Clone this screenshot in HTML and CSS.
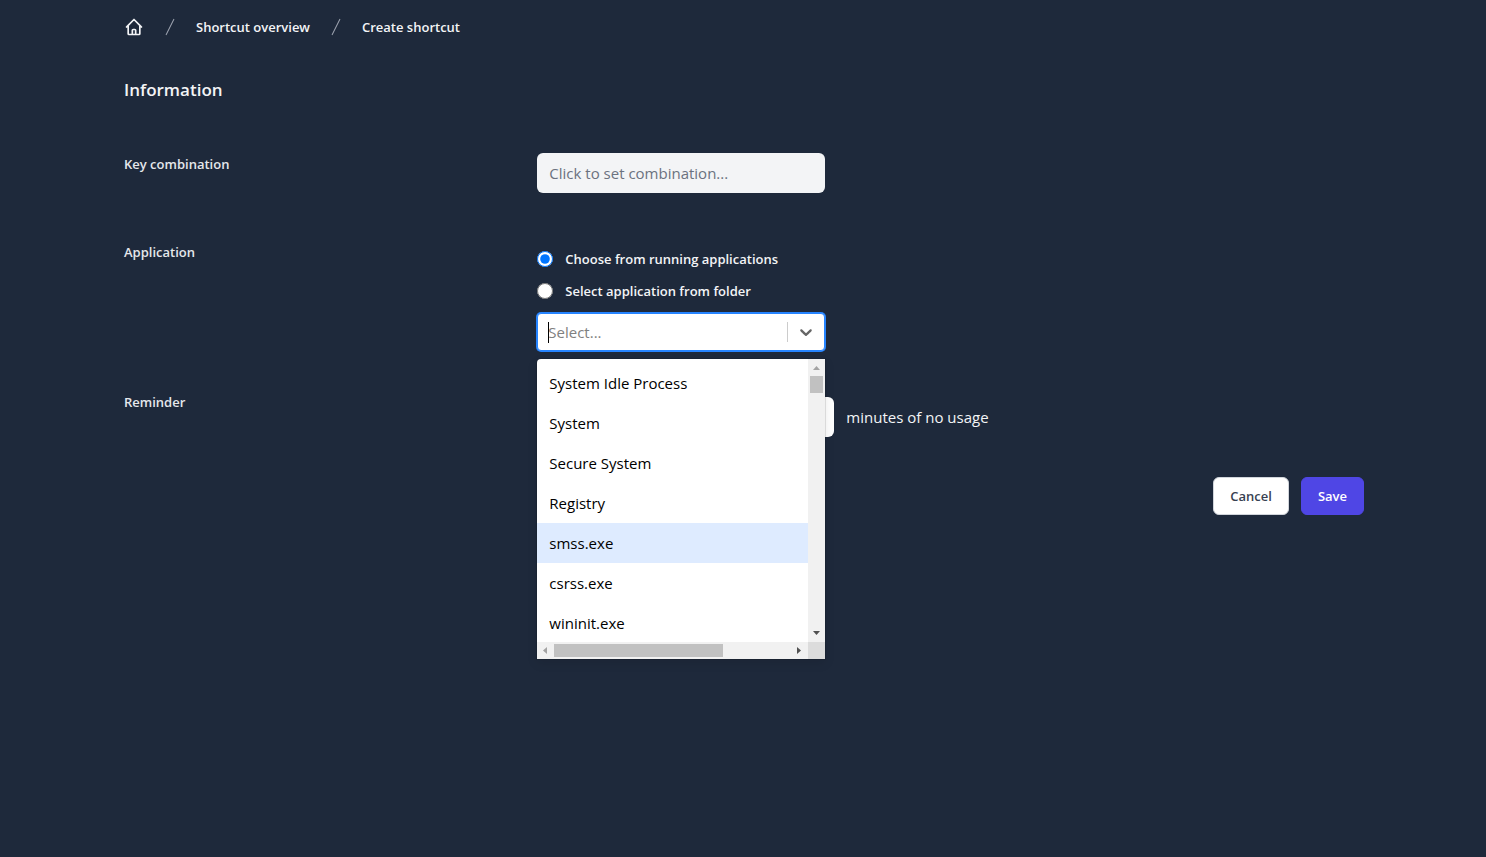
FILE: index.html
```html
<!DOCTYPE html>
<html lang="en">
<head>
    <meta charset="utf-8">
    <title>Create shortcut</title>
    <link rel="stylesheet" href="styles.css">
</head>
<body>
    <div class="container">
        <nav class="breadcrumb" aria-label="Breadcrumb">
            <a href="#" class="home" aria-label="Home">
                <svg class="icon" viewBox="0 0 24 24" fill="none" stroke="currentColor" stroke-width="2" stroke-linecap="round" stroke-linejoin="round"><path d="M3 12l2-2m0 0l7-7 7 7M5 10v10a1 1 0 001 1h3m10-11l2 2m-2-2v10a1 1 0 01-1 1h-3m-6 0a1 1 0 001-1v-4a1 1 0 011-1h2a1 1 0 011 1v4a1 1 0 001 1m-6 0h6"/></svg>
            </a>
            <svg class="icon slash" viewBox="0 0 20 20" fill="currentColor"><path d="M5.555 17.776l8-16 .894.448-8 16-.894-.448z"/></svg>
            <a href="#">Shortcut overview</a>
            <svg class="icon slash" viewBox="0 0 20 20" fill="currentColor"><path d="M5.555 17.776l8-16 .894.448-8 16-.894-.448z"/></svg>
            <a href="#">Create shortcut</a>
        </nav>

        <h1>Information</h1>

        <form>
            <div class="row row-key">
                <label class="row-label" for="combination">Key combination</label>
                <div class="row-fields">
                    <input class="text-input" type="text" id="combination" placeholder="Click to set combination...">
                </div>
            </div>

            <div class="row" role="radiogroup" aria-labelledby="app-label">
                <span class="row-label" id="app-label">Application</span>
                <div class="row-fields app-fields">
                    <label class="radio"><input type="radio" name="source" checked> Choose from running applications</label>
                    <label class="radio"><input type="radio" name="source"> Select application from folder</label>

                    <div class="select">
                        <div class="select-control">
                            <input class="select-input" type="text" role="combobox" aria-labelledby="app-label" aria-expanded="true" aria-controls="app-list" placeholder="Select...">
                            <span class="caret"></span>
                            <span class="separator"></span>
                            <button type="button" class="select-toggle" aria-label="Toggle menu">
                                <svg viewBox="0 0 20 20" width="20" height="20" fill="currentColor"><path d="M4.516 7.548c0.436-0.446 1.043-0.481 1.576 0l3.908 3.747 3.908-3.747c0.533-0.481 1.141-0.446 1.574 0 0.436 0.445 0.408 1.197 0 1.615-0.406 0.418-4.695 4.502-4.695 4.502-0.217 0.223-0.502 0.335-0.787 0.335s-0.57-0.112-0.789-0.335c0 0-4.287-4.084-4.695-4.502s-0.436-1.17 0-1.615z"/></svg>
                            </button>
                        </div>

                        <div class="menu">
                            <ul class="menu-list" role="listbox" id="app-list">
                                <li role="option">System Idle Process</li>
                                <li role="option">System</li>
                                <li role="option">Secure System</li>
                                <li role="option">Registry</li>
                                <li role="option" class="focused">smss.exe</li>
                                <li role="option">csrss.exe</li>
                                <li role="option">wininit.exe</li>
                            </ul>
                            <div class="bar bar-y">
                                <svg class="arrow off" viewBox="0 0 17 17"><path d="M5 11h7L8.500 7z"/></svg>
                                <span class="thumb"></span>
                                <svg class="arrow" viewBox="0 0 17 17"><path d="M5 6h7l-3.500 4z"/></svg>
                            </div>
                            <div class="bar bar-x">
                                <svg class="arrow off" viewBox="0 0 17 17"><path d="M10 5v7L6 8.500z"/></svg>
                                <span class="thumb"></span>
                                <svg class="arrow" viewBox="0 0 17 17"><path d="M6 5v7l4-3.500z"/></svg>
                            </div>
                            <div class="corner"></div>
                        </div>
                    </div>
                </div>
            </div>

            <div class="row">
                <label class="row-label" for="reminder">Reminder</label>
                <div class="row-fields reminder-fields">
                    <input class="text-input minutes" type="number" id="reminder">
                    <span>minutes of no usage</span>
                </div>
            </div>

            <div class="actions">
                <button type="button" class="btn">Cancel</button>
                <button type="submit" class="btn btn-primary">Save</button>
            </div>
        </form>
    </div>
</body>
</html>
```

FILE: styles.css
```css
* {
    box-sizing: border-box;
}

body {
    min-height: 100vh;
    margin: 0;
    background-color: #1e293b;
    color: #f3f4f6;
    font-family: "Segoe UI", "Open Sans", sans-serif;
    font-size: 15px;
    line-height: 24px;
}

input,
button {
    font: inherit;
}

.container {
    max-width: 1280px;
    margin: 0 auto;
    padding: 17px 19px 40px 21px;
}

.breadcrumb {
    display: flex;
    align-items: center;
    gap: 16px;
    font-size: 13px;
    font-weight: 600;
    line-height: 20px;
}

.breadcrumb a {
    color: #f3f4f6;
    text-decoration: none;
}

.icon {
    display: block;
    width: 20px;
    height: 20px;
}

.slash {
    color: #9ca3af;
}

h1 {
    margin: 41px 0 51px;
    font-size: 17px;
    font-weight: 600;
    line-height: 24px;
}

form {
    display: flex;
    flex-direction: column;
    gap: 40px;
}

.row {
    display: grid;
    grid-template-columns: 1fr 2fr;
}

.row-key {
    min-height: 48px;
}

.row-label {
    padding-top: 1px;
    color: #e5e7eb;
    font-size: 13px;
    font-weight: 600;
    line-height: 20px;
}

.text-input {
    display: block;
    width: 288px;
    height: 40px;
    padding: 8px 12px;
    border: 0;
    border-radius: 6px;
    background-color: #f3f4f6;
    color: #111827;
}

.text-input::placeholder {
    color: #6b7280;
}

.app-fields {
    display: flex;
    flex-direction: column;
    gap: 12px;
    padding-top: 8px;
}

.radio {
    display: flex;
    align-items: center;
    gap: 12px;
    font-size: 13px;
    font-weight: 600;
    line-height: 20px;
}

.radio input {
    width: 16px;
    height: 16px;
    margin: 0;
}

/* Select */
.select {
    position: relative;
    width: 288px;
}

.select-control {
    position: relative;
    display: flex;
    align-items: center;
    height: 38px;
    border: 1px solid #2684ff;
    border-radius: 4px;
    background-color: #fff;
    box-shadow: 0 0 0 1px #2684ff;
}

.select-input {
    flex: 1;
    min-width: 0;
    padding: 0 10px;
    border: 0;
    outline: 0;
    background: none;
    color: #333;
}

.select-input::placeholder {
    color: #808080;
}

.caret {
    position: absolute;
    top: 8px;
    left: 10px;
    width: 1px;
    height: 21px;
    background-color: #000;
}

.separator {
    width: 1px;
    height: 20px;
    background-color: #ccc;
}

.select-toggle {
    display: flex;
    padding: 8px;
    border: 0;
    background: none;
    color: #666;
}

.menu {
    position: absolute;
    top: 100%;
    z-index: 1;
    display: grid;
    grid-template-columns: 1fr 17px;
    grid-template-rows: 1fr 17px;
    width: 100%;
    height: 300px;
    margin-top: 8px;
    overflow: hidden;
    border-radius: 4px 0 0 0;
    background-color: #fff;
    box-shadow: 0 0 0 1px rgba(0, 0, 0, 0.1), 0 4px 11px rgba(0, 0, 0, 0.1);
}

.menu-list {
    min-height: 0;
    margin: 0;
    padding: 4px 0 0;
    overflow: hidden;
    color: #000;
    list-style: none;
}

.menu-list li {
    padding: 8px 12px;
}

.menu-list .focused {
    background-color: #deebff;
}

.bar {
    display: flex;
    background-color: #f1f1f1;
}

.bar-y {
    flex-direction: column;
}

.thumb {
    background-color: #c1c1c1;
}

.bar-y .thumb {
    height: 17px;
    margin: 0 2px auto;
}

.bar-x .thumb {
    width: 169px;
    margin: 2px auto 2px 0;
}

.arrow {
    width: 17px;
    height: 17px;
    fill: #505050;
}

.arrow.off {
    fill: #a3a3a3;
}

.corner {
    background-color: #dcdcdc;
}

.reminder-fields {
    display: flex;
    align-items: center;
    gap: 12px;
    padding-top: 6px;
}

.minutes {
    width: 297px;
    background-color: #fff;
}

.actions {
    display: flex;
    justify-content: flex-end;
    gap: 12px;
}

.btn {
    padding: 8px 16px;
    border: 1px solid #d1d5db;
    border-radius: 6px;
    background-color: #fff;
    color: #374151;
    font-size: 13px;
    font-weight: 600;
    line-height: 20px;
}

.btn-primary {
    border-color: #4f46e5;
    background-color: #4f46e5;
    color: #fff;
}
```
